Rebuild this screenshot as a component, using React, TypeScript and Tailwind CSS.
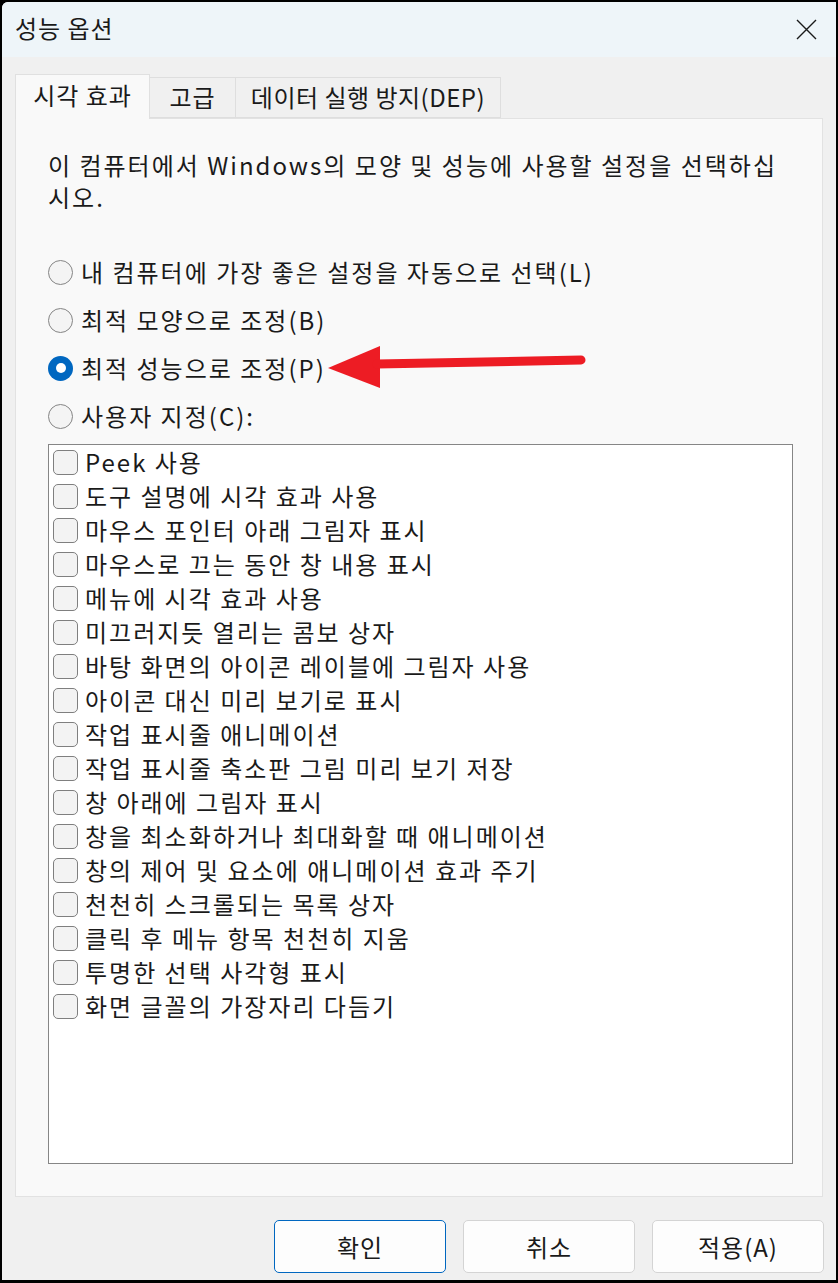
import React from "react";

const font = { fontFamily: '"Noto Sans CJK KR", "Malgun Gothic", sans-serif' };

const effects = [
  "Peek 사용",
  "도구 설명에 시각 효과 사용",
  "마우스 포인터 아래 그림자 표시",
  "마우스로 끄는 동안 창 내용 표시",
  "메뉴에 시각 효과 사용",
  "미끄러지듯 열리는 콤보 상자",
  "바탕 화면의 아이콘 레이블에 그림자 사용",
  "아이콘 대신 미리 보기로 표시",
  "작업 표시줄 애니메이션",
  "작업 표시줄 축소판 그림 미리 보기 저장",
  "창 아래에 그림자 표시",
  "창을 최소화하거나 최대화할 때 애니메이션",
  "창의 제어 및 요소에 애니메이션 효과 주기",
  "천천히 스크롤되는 목록 상자",
  "클릭 후 메뉴 항목 천천히 지움",
  "투명한 선택 사각형 표시",
  "화면 글꼴의 가장자리 다듬기",
];

const radios = [
  { label: "내 컴퓨터에 가장 좋은 설정을 자동으로 선택(L)", checked: false },
  { label: "최적 모양으로 조정(B)", checked: false },
  { label: "최적 성능으로 조정(P)", checked: true },
  { label: "사용자 지정(C):", checked: false },
];

function Radio({ checked }: { checked: boolean }) {
  if (checked) {
    return (
      <span className="flex h-[25px] w-[25px] shrink-0 items-center justify-center rounded-full bg-[#0067c0]">
        <span className="h-[10px] w-[10px] rounded-full bg-white" />
      </span>
    );
  }
  return <span className="h-[25px] w-[25px] shrink-0 rounded-full border-[1.5px] border-[#858585] bg-[#f4f4f4]" />;
}

export default function App() {
  return (
    <div
      className="relative h-[1283px] w-[838px] bg-black pb-[3px] pl-[2px] pr-[2px] pt-[2px] text-[24px] tracking-[2px] text-[#1a1a1a]"
      style={font}
    >
      <div className="flex h-full flex-col overflow-hidden rounded-tl-[6px] bg-[#f0f0f0]">
        {/* title bar */}
        <div className="flex h-[55px] shrink-0 items-center justify-between bg-[#eef5f9] pb-[4px] pl-[13px] pr-[19px]">
          <span className="leading-none tracking-[1px]">성능 옵션</span>
          <svg width="21" height="21" viewBox="0 0 21 21" className="mt-[3px] text-[#1a1a1a]">
            <path d="M1 1 L20 20 M20 1 L1 20" stroke="currentColor" strokeWidth="1.4" fill="none" />
          </svg>
        </div>

        {/* tabs */}
        <div className="mt-[17px] flex items-end pl-[13px] tracking-[1px]">
          <div className="relative z-10 -mb-px flex h-[45px] w-[135px] items-center justify-center border border-b-0 border-[#e0e0e0] bg-[#f9f9f9] pb-[4px]">
            시각 효과
          </div>
          <div className="flex h-[41px] w-[86px] items-center justify-center border border-l-0 border-[#dedede] bg-[#f0f0f0] pb-[2px]">
            고급
          </div>
          <div className="flex h-[41px] w-[265px] items-center justify-center border border-l-0 border-[#dedede] bg-[#f0f0f0] pb-[2px] tracking-[0.5px]">
            데이터 실행 방지(DEP)
          </div>
        </div>

        {/* panel */}
        <div className="mx-[13px] flex h-[1079px] flex-col border border-[#e2e2e2] bg-[#f9f9f9] pl-[32px] pr-[29px] pt-[30px]">
          <p className="whitespace-nowrap leading-[32px]">
            이 컴퓨터에서 Windows의 모양 및 성능에 사용할 설정을 선택하십
            <br />
            시오.
          </p>

          <div className="mt-[35px] flex flex-col">
            {radios.map((r) => (
              <div key={r.label} className="flex h-[48px] items-center gap-[8px]">
                <Radio checked={r.checked} />
                <span className="leading-none">{r.label}</span>
              </div>
            ))}
          </div>

          <div className="mt-[4px] h-[720px] border border-[#868686] bg-white pl-[4px]">
            {effects.map((e) => (
              <div key={e} className="flex h-[34px] items-center gap-[7px]">
                <span className="h-[25px] w-[25px] shrink-0 rounded-[5px] border-[1.5px] border-[#7f7f7f] bg-[#f3f3f3]" />
                <span className="leading-none">{e}</span>
              </div>
            ))}
          </div>
        </div>

        {/* buttons */}
        <div className="mt-[23px] flex justify-end gap-[17px] pr-[12px] tracking-[1px]">
          <button className="flex h-[53px] w-[172px] items-center justify-center rounded-[5px] border-[1.5px] border-[#0067c0] bg-[#fdfdfd]">
            확인
          </button>
          <button className="flex h-[53px] w-[172px] items-center justify-center rounded-[5px] border border-[#d4d4d4] bg-[#fdfdfd]">
            취소
          </button>
          <button className="flex h-[53px] w-[172px] items-center justify-center rounded-[5px] border border-[#d4d4d4] bg-[#fdfdfd]">
            적용(A)
          </button>
        </div>
      </div>

      {/* red annotation arrow */}
      <svg className="pointer-events-none absolute left-[325px] top-[342px]" width="262" height="48" viewBox="0 0 262 48">
        <path d="M3 26 L55 4 L55 46 Z" fill="#ed1c24" />
        <path d="M52 22 L256 18" stroke="#ed1c24" strokeWidth="9" strokeLinecap="round" fill="none" />
      </svg>
    </div>
  );
}
